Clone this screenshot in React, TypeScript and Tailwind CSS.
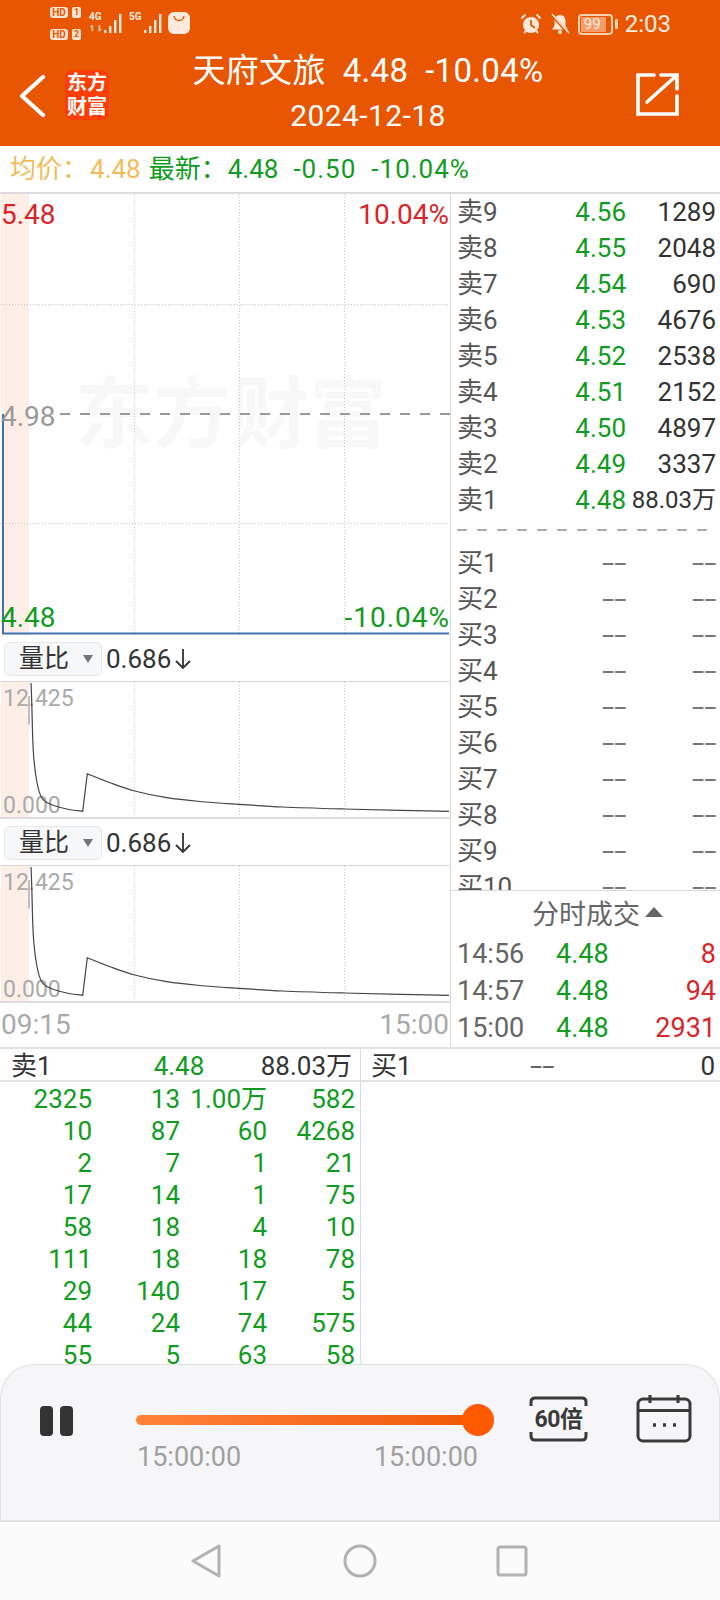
const sells = [
  ['卖9', '4.56', '1289'],
  ['卖8', '4.55', '2048'],
  ['卖7', '4.54', '690'],
  ['卖6', '4.53', '4676'],
  ['卖5', '4.52', '2538'],
  ['卖4', '4.51', '2152'],
  ['卖3', '4.50', '4897'],
  ['卖2', '4.49', '3337'],
  ['卖1', '4.48', '88.03万'],
]
const buys = ['买1', '买2', '买3', '买4', '买5', '买6', '买7', '买8', '买9', '买10']
const trades = [
  ['14:56', '4.48', '8'],
  ['14:57', '4.48', '94'],
  ['15:00', '4.48', '2931'],
]
const orders = [
  ['2325', '13', '1.00万', '582'],
  ['10', '87', '60', '4268'],
  ['2', '7', '1', '21'],
  ['17', '14', '1', '75'],
  ['58', '18', '4', '10'],
  ['111', '18', '18', '78'],
  ['29', '140', '17', '5'],
  ['44', '24', '74', '575'],
  ['55', '5', '63', '58'],
]

// catmull-rom through the sampled points so the decay reads as a curve
function smooth(pts: number[][]) {
  let d = `M${pts[0][0]} ${pts[0][1]}`
  for (let i = 0; i < pts.length - 1; i++) {
    const p0 = pts[Math.max(i - 1, 0)]
    const p1 = pts[i]
    const p2 = pts[i + 1]
    const p3 = pts[Math.min(i + 2, pts.length - 1)]
    const c1x = p1[0] + (p2[0] - p0[0]) / 6
    const c1y = p1[1] + (p2[1] - p0[1]) / 6
    const c2x = p2[0] - (p3[0] - p1[0]) / 6
    const c2y = p2[1] - (p3[1] - p1[1]) / 6
    d += ` C${c1x} ${c1y} ${c2x} ${c2y} ${p2[0]} ${p2[1]}`
  }
  return d
}

const ratioCurve =
  smooth([[31, 1], [31.7, 19], [33.3, 69], [36.7, 99], [41.7, 115.7], [50, 122], [66.7, 127], [82.7, 129.3]]) +
  ' L87.3 91.7 ' +
  smooth([[87.3, 91.7], [110, 100.7], [134.7, 109], [166.7, 115.7], [200, 119.5], [239, 122.3], [283, 125], [344, 127], [400, 128.3], [449, 129.3]]).replace('M87.3 91.7', '')

function Bars({ className }: { className?: string }) {
  return (
    <svg width="20" height="22" viewBox="0 0 20 22" className={className}>
      <g fill="#fde9dc">
        <rect x="0" y="17" width="2.4" height="3" />
        <rect x="5" y="13" width="2.4" height="7" />
        <rect x="10" y="7" width="2.4" height="13" />
        <rect x="15" y="1" width="2.4" height="19" />
      </g>
    </svg>
  )
}

function Sim({ n }: { n: string }) {
  return (
    <div className="flex items-center gap-[4px]">
      <span className="w-[18px] h-[11px] rounded-[3px] bg-[#fde3d2] text-[#e85602] text-[10px] leading-[11px] font-bold text-center">
        HD
      </span>
      <span className="w-[9px] h-[11px] rounded-[2px] bg-[#fde3d2] text-[#e85602] text-[9px] leading-[11px] font-bold text-center">
        {n}
      </span>
    </div>
  )
}

function Dashes({ className }: { className?: string }) {
  return <span className={`inline-block scale-x-[1.7] origin-right ${className}`}>--</span>
}

function StatusBar() {
  return (
    <div className="h-[42px] flex items-start pl-[50px] pr-[49px] text-[#fdeee0]">
      <div className="flex flex-col gap-[11px] pt-[7px]">
        <Sim n="1" />
        <Sim n="2" />
      </div>
      <div className="relative ml-[8px] mt-[13px] w-[32px] h-[22px]">
        <span className="absolute left-0 top-[-2px] text-[10px] leading-[11px] font-bold">4G</span>
        <span className="absolute left-0 top-[11px] text-[8px] leading-[10px] font-bold">↿⇂</span>
        <Bars className="absolute left-[15px] top-0" />
      </div>
      <div className="relative ml-[8px] mt-[13px] w-[32px] h-[22px]">
        <span className="absolute left-0 top-[-2px] text-[10px] leading-[11px] font-bold">5G</span>
        <Bars className="absolute left-[15px] top-0" />
      </div>
      <div className="ml-[7px] mt-[12px] w-[22px] h-[22px] rounded-[6px] bg-[#fdeadc] flex justify-center pt-[3px]">
        <svg width="14" height="8" viewBox="0 0 14 8" fill="none" stroke="#e85602" strokeWidth="1.5">
          <path d="M2 1 C3 7 11 7 12 1" />
        </svg>
      </div>
      <div className="ml-auto flex items-center h-[48px]">
        <svg width="22" height="22" viewBox="0 0 22 22" className="mr-[8px]">
          <circle cx="11" cy="12" r="8" fill="#fdeadc" />
          <path d="M11 7 V12 L15 15" fill="none" stroke="#e85602" strokeWidth="1.8" />
          <path d="M1.5 5.5 L5.5 1.5 M20.5 5.5 L16.5 1.5 M4 20 L6 18 M18 20 L16 18" stroke="#fdeadc" strokeWidth="2" />
        </svg>
        <svg width="20" height="22" viewBox="0 0 20 22" className="mr-[8px]">
          <path d="M10 2 C6 2 4.5 5 4.5 8 V13 L2 16.5 H18 L15.5 13 V8 C15.5 5 14 2 10 2 Z" fill="#fdeadc" />
          <circle cx="10" cy="19" r="2" fill="#fdeadc" />
          <path d="M2 2 L18 20" stroke="#e85602" strokeWidth="3" />
          <path d="M2 1 L19 20" stroke="#fdeadc" strokeWidth="1.5" />
        </svg>
        <div className="relative w-[35px] h-[21px] rounded-[4px] border-2 border-[#fbcfae] p-[1px]">
          <div className="h-full w-[25px] bg-[#f59c68] rounded-[1px]" />
          <span className="absolute left-[4px] top-[-2px] text-[15px] leading-[21px] text-[#fdeee0]">99</span>
        </div>
        <div className="w-[3px] h-[10px] bg-[#fbcfae] mr-[7px] ml-[2px] rounded-[1px]" />
        <span className="text-[24px] leading-none">2:03</span>
      </div>
    </div>
  )
}

function Header() {
  return (
    <div className="h-[146px] bg-[#e85602] text-white flex flex-col shrink-0">
      <StatusBar />
      <div className="flex items-start">
        <svg width="30" height="44" viewBox="0 0 30 44" className="ml-[18px] mt-[32px]" fill="none" stroke="white" strokeWidth="4.2" strokeLinecap="round" strokeLinejoin="round">
          <path d="M25 3 L4 22 L25 41" />
        </svg>
        <div className="ml-[17px] mt-[28px] w-[44px] h-[50px] rounded-[8px] bg-[#fb3d06] flex flex-col items-center justify-center text-[20px] leading-[24px] font-bold">
          <span>东方</span>
          <span>财富</span>
        </div>
        <div className="w-[516px] ml-[1px] flex flex-col items-center">
          <div className="text-[33px] leading-[44px] mt-[7px] whitespace-pre tracking-[0.3px]">天府文旅  4.48  -10.04%</div>
          <div className="text-[30px] leading-[36px] mt-[5px] tracking-[0.4px]">2024-12-18</div>
        </div>
        <svg width="44" height="44" viewBox="0 0 44 44" className="ml-[10px] mt-[31px]" fill="none" stroke="white" strokeWidth="3.6" strokeLinecap="round">
          <path d="M18 2 H2 V41 H41 V23" />
          <path d="M11 29 L40 3 M25 2 H41 V16" />
        </svg>
      </div>
    </div>
  )
}

function PriceChart() {
  return (
    <div className="relative h-[441px] overflow-hidden">
      <div className="absolute left-[1px] top-0 bottom-0 w-[28px] bg-[#fdeee8]" />
      <div className="absolute left-[75px] top-[183px] text-[78px] leading-[78px] font-bold text-[#f8f8f8] whitespace-nowrap">
        东方财富
      </div>
      <svg width="450" height="441" className="absolute inset-0">
        <g stroke="#c8c8c8" strokeWidth="1" strokeDasharray="1 2">
          <line x1="134.5" y1="0" x2="134.5" y2="441" />
          <line x1="239.5" y1="0" x2="239.5" y2="441" />
          <line x1="344.5" y1="0" x2="344.5" y2="441" />
          <line x1="0" y1="110.5" x2="448" y2="110.5" />
          <line x1="0" y1="329.5" x2="448" y2="329.5" />
        </g>
        <line x1="60" y1="220" x2="450" y2="220" stroke="#999" strokeWidth="2" strokeDasharray="10 10" />
        <path d="M3 220 V439.5 H449" fill="none" stroke="#3f74b0" strokeWidth="2" />
      </svg>
      <span className="absolute left-[1px] top-[5px] text-[28px] leading-[32px] text-[#d9252a]">5.48</span>
      <span className="absolute right-[1px] top-[5px] text-[28px] leading-[32px] text-[#d9252a]">10.04%</span>
      <span className="absolute left-[1px] top-[207px] text-[28px] leading-[32px] text-[#999]">4.98</span>
      <span className="absolute left-[1px] top-[408px] text-[28px] leading-[32px] text-[#109c1e]">4.48</span>
      <span className="absolute right-0 top-[408px] text-[28px] leading-[32px] tracking-[1px] text-[#109c1e]">-10.04%</span>
    </div>
  )
}

function RatioPanel() {
  return (
    <>
      <div className="h-[47px] flex items-center pt-[1px] pl-[4px] border-b border-[#d8d8d8]">
        <div className="w-[98px] h-[34px] rounded-[6px] bg-[#f6f7f9] border border-[#e6e8ec] flex items-center pl-[14px]">
          <span className="text-[25px] leading-none text-[#333]">量比</span>
          <span className="ml-[14px] w-0 h-0 border-x-[5px] border-x-transparent border-t-[8px] border-t-[#777]" />
        </div>
        <span className="ml-[4px] text-[26px] leading-none text-[#333]">0.686</span>
        <svg width="18" height="24" viewBox="0 0 18 24" fill="none" stroke="#333" strokeWidth="1.8" className="ml-[3px]">
          <path d="M9 2 V21 M2 14 L9 21 L16 14" />
        </svg>
      </div>
      <div className="relative h-[137px] border-b-2 border-[#dcdcdc] overflow-hidden">
        <div className="absolute left-[1px] top-0 bottom-0 w-[28px] bg-[#fdeee8]" />
        <span className="absolute left-[3px] top-[3px] text-[23px] leading-[28px] text-[#aaa]">12.425</span>
        <span className="absolute left-[3px] top-[110px] text-[23px] leading-[28px] text-[#aaa]">0.000</span>
        <svg width="450" height="137" className="absolute inset-0" fill="none">
          <g stroke="#c8c8c8" strokeWidth="1" strokeDasharray="1 2">
            <line x1="134.5" y1="0" x2="134.5" y2="135" />
            <line x1="239.5" y1="0" x2="239.5" y2="135" />
            <line x1="344.5" y1="0" x2="344.5" y2="135" />
          </g>
          <line x1="29" y1="14" x2="29" y2="43" stroke="#888" strokeWidth="1" />
          <path d={ratioCurve} stroke="#444" strokeWidth="1.2" />
        </svg>
      </div>
    </>
  )
}

function LeftCharts() {
  return (
    <div className="w-[450px] shrink-0 flex flex-col">
      <PriceChart />
      <RatioPanel />
      <RatioPanel />
      <div className="h-[44px] flex items-center justify-between pl-[1px] pr-[1px] text-[28px] leading-none text-[#aaa]">
        <span>09:15</span>
        <span>15:00</span>
      </div>
    </div>
  )
}

function QuoteRow({ label, price, vol, priceClass, volClass }: { label: string; price: string; vol: string; priceClass: string; volClass: string }) {
  return (
    <div className="h-[36px] shrink-0 flex items-center pl-[6px] pr-[4px] text-[26px] leading-none whitespace-nowrap">
      <span className="w-[79px] text-[#555]">{label}</span>
      <span className={`w-[90px] text-right ${priceClass}`}>{price === '--' ? <Dashes /> : price}</span>
      <span className={`flex-1 text-right ${volClass} ${vol.length > 4 ? 'text-[24px]' : ''}`}>{vol === '--' ? <Dashes /> : vol}</span>
    </div>
  )
}

function QuotePanel() {
  return (
    <div className="flex-1 flex flex-col border-l border-[#d8d8d8]">
      <div className="h-[699px] overflow-hidden border-b border-[#d8d8d8]">
        {sells.map((r) => (
          <QuoteRow key={r[0]} label={r[0]} price={r[1]} vol={r[2]} priceClass="text-[#109c1e]" volClass="text-[#333]" />
        ))}
        <div className="h-[2px] mt-[11px] mb-[14px] mx-[6px] w-[250px] bg-[repeating-linear-gradient(90deg,#aaa_0,#aaa_10px,transparent_10px,transparent_20px)]" />
        {buys.map((b) => (
          <QuoteRow key={b} label={b} price="--" vol="--" priceClass="text-[#777]" volClass="text-[#777]" />
        ))}
      </div>
      <div className="h-[46px] flex items-center pl-[81px] pt-[4px] text-[27px] leading-none text-[#666]">
        <span>分时成交</span>
        <span className="ml-[5px] mb-[7px] w-0 h-0 border-x-[9px] border-x-transparent border-b-[10px] border-b-[#666]" />
      </div>
      {trades.map((t) => (
        <div key={t[0]} className="h-[37px] flex items-center pl-[6px] pr-[4px] text-[27px] leading-none">
          <span className="w-[99px] text-[#666]">{t[0]}</span>
          <span className="text-[#109c1e]">{t[1]}</span>
          <span className="flex-1 text-right text-[#d9252a]">{t[2]}</span>
        </div>
      ))}
    </div>
  )
}

function OrderQueue() {
  return (
    <div className="flex-1 min-h-0 flex flex-col overflow-hidden">
      <div className="h-[35px] shrink-0 flex border-y-2 border-[#e2e2e2] text-[26px] leading-none">
        <div className="w-[361px] border-r border-[#dcdcdc] flex items-center pl-[11px] pr-[8px] pt-[2px]">
          <span className="text-[#333]">卖1</span>
          <span className="ml-[102px] text-[#109c1e]">4.48</span>
          <span className="ml-auto text-[#333]">88.03万</span>
        </div>
        <div className="flex-1 flex items-center pl-[10px] pr-[5px] pt-[2px]">
          <span className="text-[#333]">买1</span>
          <span className="ml-[128px] text-[#666]"><Dashes /></span>
          <span className="ml-auto text-[#333]">0</span>
        </div>
      </div>
      <div className="flex-1 min-h-0 w-[361px] border-r border-[#dcdcdc] pt-[1px] pr-[5px] overflow-hidden">
        {orders.map((r, i) => (
          <div key={i} className="grid grid-cols-[92px_88px_87px_88px] h-[32px] items-center text-right text-[26px] leading-none text-[#109c1e]">
            {r.map((c, j) => (
              <span key={j}>{c}</span>
            ))}
          </div>
        ))}
      </div>
    </div>
  )
}

function Player() {
  return (
    <div className="h-[158px] shrink-0 rounded-t-[34px] bg-[#f6f6f9] border border-b-2 border-[#e2e2e4] flex items-start pl-[39px] pt-[31px]">
      <div className="mt-[10px] flex gap-[7px]">
        <div className="w-[13px] h-[30px] rounded-[4px] bg-[#333]" />
        <div className="w-[13px] h-[30px] rounded-[4px] bg-[#333]" />
      </div>
      <div className="ml-[63px] w-[358px] mt-[7px]">
        <div className="relative h-[34px] flex items-center">
          <div className="h-[10px] w-[330px] rounded-l-full bg-gradient-to-r from-[#ff8238] to-[#f05a05]" />
          <div className="absolute right-0 top-[1px] w-[32px] h-[32px] rounded-full bg-[#ff5a00]" />
        </div>
        <div className="flex justify-between pl-[1px] pr-[16px] mt-[5px] text-[27px] leading-[30px] text-[#a0a0a0]">
          <span>15:00:00</span>
          <span>15:00:00</span>
        </div>
      </div>
      <div className="relative ml-[35px] w-[59px] h-[46px] flex items-center justify-center">
        <svg width="59" height="46" viewBox="0 0 59 46" fill="none" stroke="#3a3a3a" strokeWidth="3" className="absolute inset-0">
          <path d="M2 10 V6 Q2 2 6 2 H53 Q57 2 57 6 V10" />
          <path d="M2 36 V40 Q2 44 6 44 H53 Q57 44 57 40 V36" />
        </svg>
        <span className="text-[23px] leading-none font-bold text-[#3a3a3a] tracking-[-0.5px]">60倍</span>
      </div>
      <svg width="56" height="48" viewBox="0 0 56 48" fill="none" stroke="#3a3a3a" strokeWidth="3" className="ml-[48px] -mt-[1px]">
        <rect x="2" y="4" width="52" height="42" rx="5" />
        <path d="M2 15.5 H54 M14 0 V8 M42 0 V8" />
        <path d="M17 30 H20 M27 30 H30 M37 30 H40" strokeWidth="3.5" />
      </svg>
    </div>
  )
}

function NavBar() {
  return (
    <div className="h-[78px] shrink-0 bg-[#fbfbfb] flex items-center pl-[191px]">
      <svg width="30" height="34" viewBox="0 0 30 34" fill="none" stroke="#b2b2b2" strokeWidth="3" strokeLinejoin="round">
        <path d="M28 2 V32 L2 17 Z" />
      </svg>
      <svg width="34" height="34" viewBox="0 0 34 34" fill="none" stroke="#b2b2b2" strokeWidth="3" className="ml-[122px]">
        <circle cx="17" cy="17" r="15" />
      </svg>
      <svg width="32" height="32" viewBox="0 0 32 32" fill="none" stroke="#b2b2b2" strokeWidth="3" strokeLinejoin="round" className="ml-[119px]">
        <rect x="2" y="2" width="28" height="28" rx="2" />
      </svg>
    </div>
  )
}

export default function App() {
  return (
    <div className="w-[720px] h-[1600px] bg-white flex flex-col overflow-hidden font-['Roboto','Noto_Sans_CJK_SC',sans-serif]">
      <Header />
      <div className="h-[46px] shrink-0 flex items-center pl-[10px] text-[26px] leading-none whitespace-pre">
        <span className="text-[#f2bc5a]">均价：</span>
        <span className="ml-[2px] text-[#f2bc5a]">4.48</span>
        <span className="ml-[8px] text-[#109c1e]">最新：</span>
        <span className="ml-[1px] text-[#109c1e]">4.48</span>
        <span className="ml-[15px] text-[#109c1e] tracking-[1px]">-0.50</span>
        <span className="ml-[15px] text-[#109c1e] tracking-[1px]">-10.04%</span>
      </div>
      <div className="h-[855px] shrink-0 flex border-t-2 border-[#dcdce0]">
        <LeftCharts />
        <QuotePanel />
      </div>
      <OrderQueue />
      <Player />
      <NavBar />
    </div>
  )
}
